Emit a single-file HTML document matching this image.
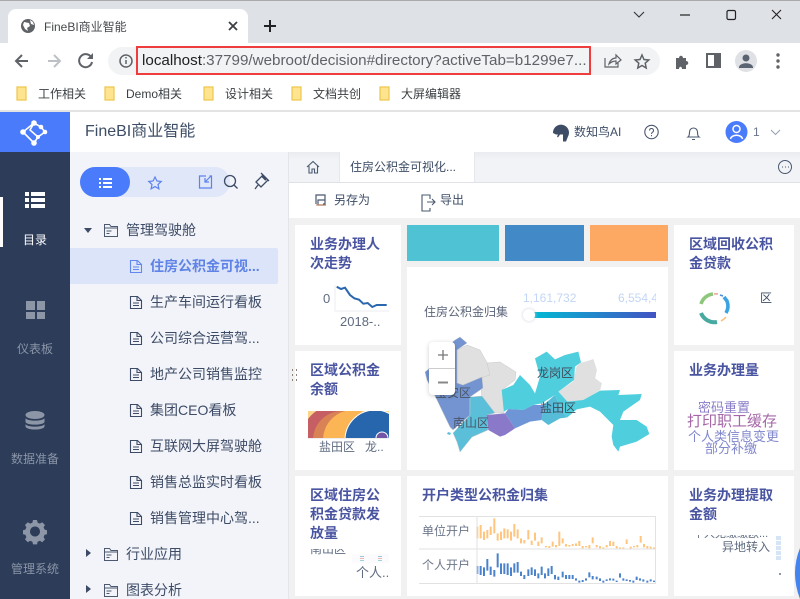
<!DOCTYPE html>
<html lang="zh"><head><meta charset="utf-8"><title>FineBI商业智能</title>
<style>
html,body{margin:0;padding:0;width:800px;height:599px;overflow:hidden;background:#fff}
body{position:relative;font-family:"Liberation Sans","Noto Sans CJK SC",sans-serif}
.b{position:absolute}
.t{position:absolute;white-space:nowrap;line-height:1}
.card{position:absolute;background:#fff}
.ct{position:absolute;font-size:14px;font-weight:bold;color:#4a55a2;line-height:19px;white-space:nowrap}
.row{font-size:14px;color:#3d4b66}
.nav{font-size:12px;color:#8b95a7;text-align:center;width:70px;left:0}
svg{position:absolute;overflow:hidden}
</style></head><body>
<!-- browser chrome -->
<div class="b" style="left:0;top:0;width:800px;height:43px;background:#dee1e6;border-top:1px solid #aaa;box-sizing:border-box"></div>
<div class="b" style="left:8px;top:9px;width:240px;height:34px;background:#fff;border-radius:8px 8px 0 0"></div>
<svg style="left:0;top:0" width="800" height="110" viewBox="0 0 800 110">
<circle cx="28" cy="26" r="7" fill="#5f6368"/><path d="M24 22l5 1 1 3-3 2 1 3-3-2-2-4zM30 20l3 2 1 3-3-1z" fill="#fff"/>
<path d="M229 22l8 8M237 22l-8 8" stroke="#3c4043" stroke-width="1.8"/>
<path d="M270 20v12M264 26h12" stroke="#202124" stroke-width="2"/>
<path d="M634 12l5 5 5-5" fill="none" stroke="#333" stroke-width="1.1"/>
<path d="M680 15h10" stroke="#222" stroke-width="1.2"/>
<rect x="727" y="10.5" width="8.500" height="9" rx="1.500" fill="none" stroke="#222" stroke-width="1.200"/>
<path d="M772 10l9 9M781 10l-9 9" stroke="#222" stroke-width="1.100"/>
<path d="M28 61H16M22 55l-6 6 6 6" fill="none" stroke="#5f6368" stroke-width="2"/>
<path d="M48 61h12M54 55l6 6-6 6" fill="none" stroke="#bdc1c6" stroke-width="2"/>
<path d="M91 57a6.500 6.500 0 1 0 1 5" fill="none" stroke="#5f6368" stroke-width="2"/><path d="M93 53v6h-6z" fill="#5f6368"/>
</svg>
<div class="b" style="left:108px;top:47px;width:552px;height:28px;background:#f1f3f4;border-radius:14px"></div>
<svg style="left:0;top:0" width="800" height="110" viewBox="0 0 800 110">
<circle cx="126" cy="61" r="6" fill="none" stroke="#5f6368" stroke-width="1.500"/><path d="M126 60v4M126 57v1.500" stroke="#5f6368" stroke-width="1.500"/>
<path d="M605 58v9h13v-4" fill="none" stroke="#5f6368" stroke-width="1.200"/><path d="M609 64c1-4 4-6 7-6v-3l5 5-5 4v-3c-3 0-5 1-7 3z" fill="none" stroke="#5f6368" stroke-width="1.200"/>
<path d="M642 55l2 4.500 4.800.5-3.600 3.200 1 4.800-4.200-2.500-4.200 2.500 1-4.800-3.600-3.200 4.800-.5z" fill="none" stroke="#5f6368" stroke-width="1.500"/>
<path d="M676 58h3c0-3 4-3 4 0h3v3c3 0 3 4 0 4v4h-4c0-3-3-3-3 0h-3z" fill="#5f6368"/>
<rect x="707" y="54" width="13" height="13" fill="none" stroke="#5f6368" stroke-width="2"/><rect x="714" y="54" width="7" height="13" fill="#5f6368"/>
<circle cx="746" cy="61" r="11" fill="#dfe1e5"/><circle cx="746" cy="58" r="3.500" fill="#5a6371"/><path d="M739 67c1-5 13-5 14 0v1h-14z" fill="#5a6371"/>
<circle cx="778" cy="55" r="1.700" fill="#5f6368"/><circle cx="778" cy="61" r="1.700" fill="#5f6368"/><circle cx="778" cy="67" r="1.700" fill="#5f6368"/>
<g fill="#ffe48f" stroke="#eec64f" stroke-width="1.200"><path d="M17 87h9v13h-9z"/><path d="M105 87h9v13h-9z"/><path d="M204 87h9v13h-9z"/><path d="M292 87h9v13h-9z"/><path d="M380 87h9v13h-9z"/></g>
</svg>
<div class="b" style="left:136px;top:46px;width:455px;height:29px;border:2px solid #ef3d3d;box-sizing:border-box"></div>
<div class="t" style="left:44px;top:21px;font-size:12px;color:#45484c">FineBI商业智能</div>
<div class="t" style="left:142px;top:53px;font-size:15.200px;color:#5f6368;width:447px;overflow:hidden"><span style="color:#202124">localhost</span>:37799/webroot/decision#directory?activeTab=b1299e7...</div>
<div class="t" style="left:38px;top:88px;font-size:12px;color:#3c4043">工作相关</div>
<div class="t" style="left:126px;top:88px;font-size:12px;color:#3c4043">Demo相关</div>
<div class="t" style="left:225px;top:88px;font-size:12px;color:#3c4043">设计相关</div>
<div class="t" style="left:313px;top:88px;font-size:12px;color:#3c4043">文档共创</div>
<div class="t" style="left:401px;top:88px;font-size:12px;color:#3c4043">大屏编辑器</div>
<div class="b" style="left:0;top:110px;width:800px;height:2px;background:#e3e3e3"></div>

<!-- left nav -->
<div class="b" style="left:0;top:112px;width:70px;height:487px;background:#2c3c59"></div>
<div class="b" style="left:0;top:112px;width:70px;height:40px;background:#4a7bfb"></div>
<svg style="left:0;top:112px" width="70" height="40" viewBox="0 0 70 40">
<path d="M34 31L23 20L34 11L41 15L45 20L38 25L34 31M34 11L30 18L38 25" fill="none" stroke="#fff" stroke-width="1.600"/>
<circle cx="23" cy="20" r="2.800" fill="#fff"/><circle cx="34" cy="11" r="2.800" fill="#fff"/><circle cx="41" cy="15" r="2.300" fill="#fff"/><circle cx="45" cy="20" r="2.300" fill="#fff"/><circle cx="34" cy="31" r="2.800" fill="#fff"/><circle cx="38" cy="25" r="2" fill="#fff"/>
</svg>
<div class="b" style="left:0;top:197px;width:3px;height:50px;background:#fff"></div>
<svg style="left:0;top:112px" width="70" height="487" viewBox="0 112 70 487">
<g fill="#fff"><path d="M25 192h4v4h-4zM31 192h14v4H31zM25 198h4v4h-4zM31 198h14v4H31zM25 204h4v4h-4zM31 204h14v4H31z"/></g>
<g fill="#8d96a6"><path d="M26 301h9v9h-9zM37 301h8v9h-8zM37 312h8v7h-8zM26 312h9v7h-9z"/>
<ellipse cx="35" cy="415" rx="9.500" ry="4"/><path d="M25.500 418c1 3.500 18 3.500 19 0v4c-1 3.500-18 3.500-19 0zM25.500 424c1 3.500 18 3.500 19 0v2.500c-1 4-18 4-19 0z"/>
<path fill-rule="evenodd" d="M33 520h4l.6 2.600 2.300 1 2.300-1.400 2.800 2.800-1.400 2.300 1 2.300 2.400.6v4l-2.400.6-1 2.300 1.400 2.300-2.800 2.800-2.300-1.400-2.300 1-.6 2.600h-4l-.6-2.600-2.300-1-2.300 1.400-2.800-2.800 1.400-2.300-1-2.300-2.400-.6v-4l2.400-.6 1-2.300-1.400-2.300 2.800-2.800 2.300 1.400 2.300-1zM35 526.500a5 5 0 1 0 .01 0z"/></g>
</svg>
<div class="t nav" style="top:234px;color:#fff">目录</div>
<div class="t nav" style="top:343px">仪表板</div>
<div class="t nav" style="top:453px">数据准备</div>
<div class="t nav" style="top:563px">管理系统</div>

<!-- header -->
<div class="t" style="left:85px;top:124px;font-size:16px;color:#3d4d66">FineBI商业智能</div>
<svg style="left:0;top:0" width="800" height="599" viewBox="0 0 800 599">
<path d="M553 133a8 8 0 1 1 15 3.500l-2 5h-3v-7h-3l-2 3-1-1 1-2h-2z" fill="#3d4d66"/>
<circle cx="651.500" cy="132" r="6.700" fill="none" stroke="#4a5870" stroke-width="1.100"/><path d="M649.500 130.500a2 2 0 1 1 3 1.700c-.8.500-1 1-1 1.800M651.500 135v1.200" fill="none" stroke="#4a5870" stroke-width="1"/>
<path d="M688 137c1.500-1 1.500-3 1.500-5a4 4 0 0 1 8 0c0 2 0 4 1.500 5zM692 139.500h3" fill="none" stroke="#4a5870" stroke-width="1.100"/>
<circle cx="736.500" cy="132" r="11" fill="#4a7bfb"/><circle cx="736.500" cy="129" r="3.500" fill="none" stroke="#fff" stroke-width="1.500"/><path d="M730.500 139c1-5 11-5 12 0" fill="none" stroke="#fff" stroke-width="1.500"/>
<path d="M771 130l4.500 4.500 4.500-4.500" fill="none" stroke="#9aa3b2" stroke-width="1.100"/>
</svg>
<div class="t" style="left:574px;top:126px;font-size:12px;color:#3d4d66">数知鸟AI</div>
<div class="t" style="left:753px;top:126px;font-size:12px;color:#6b7689">1</div>

<!-- directory panel -->
<div class="b" style="left:70px;top:152px;width:219px;height:447px;background:#f2f4f9;border-right:1px solid #e3e5ea;box-sizing:border-box"></div>
<div class="b" style="left:80px;top:167px;width:150px;height:30px;background:#e0e7f8;border-radius:15px"></div>
<div class="b" style="left:80px;top:167px;width:50px;height:30px;background:#4a7bfb;border-radius:15px"></div>
<div class="b" style="left:70px;top:248px;width:208px;height:36px;background:#dbe4f8;border-radius:0 2px 2px 0"></div>
<svg style="left:0;top:0" width="800" height="599" viewBox="0 0 800 599">
<path d="M99 178h2v2h-2zM103 178h9v2h-9zM99 182h2v2h-2zM103 182h9v2h-9zM99 186h2v2h-2zM103 186h9v2h-9z" fill="#fff"/>
<path d="M155 177l1.900 4 4.300.5-3.200 3 .9 4.300-3.900-2.200-3.900 2.200.9-4.300-3.200-3 4.300-.5z" fill="none" stroke="#5c82ee" stroke-width="1.200"/>
<path d="M206 176h-6.500v12h12v-12h-2M211 176l-6 6M205 178v4h4" fill="none" stroke="#5c82ee" stroke-width="1.200"/>
<circle cx="230" cy="181" r="5.500" fill="none" stroke="#3d4b66" stroke-width="1.300"/><path d="M234 185l3.500 3.500" stroke="#3d4b66" stroke-width="1.300"/>
<path d="M256 182l7-7 5 5-7 7zM261 173l8 8M258 185l-3 4" fill="none" stroke="#3d4b66" stroke-width="1.300"/><path d="M262 176l4 4" stroke="#3d4b66" stroke-width="2"/>
<path d="M84 228h8l-4 5z" fill="#3d4b66"/><path d="M86 549v8l5-4z" fill="#3d4b66"/><path d="M86 585v8l5-4z" fill="#3d4b66"/>
<g fill="none" stroke="#4a5870" stroke-width="1"><path d="M104.500 236.500v-12h5l1.500 2h6.500v10zM104.500 228h13M106.500 231h5M106.500 233.500h3"/></g>
<g fill="none" stroke="#4a5870" stroke-width="1"><path d="M104.500 560.500v-12h5l1.500 2h6.500v10zM104.500 552h13M106.500 555h5M106.500 557.500h3"/><path d="M104.500 596.500v-12h5l1.500 2h6.500v10zM104.500 588h13M106.500 591h5M106.500 593.500h3"/></g>
<defs><path id="d" d="M130.500 260.500h7l4 4v8h-11zM137 260.500v4h4.500M133 267h6M133 269.500h6" fill="none" stroke-width="1.100"/></defs>
<use href="#d" stroke="#6288ee"/>
<use href="#d" y="36" stroke="#3d4b66"/><use href="#d" y="72" stroke="#3d4b66"/><use href="#d" y="108" stroke="#3d4b66"/><use href="#d" y="144" stroke="#3d4b66"/><use href="#d" y="180" stroke="#3d4b66"/><use href="#d" y="216" stroke="#3d4b66"/><use href="#d" y="252" stroke="#3d4b66"/>
</svg>
<div class="t row" style="left:126px;top:223px">管理驾驶舱</div>
<div class="t row" style="left:150px;top:259px;color:#5f83e6;font-weight:bold">住房公积金可视...</div>
<div class="t row" style="left:150px;top:295px">生产车间运行看板</div>
<div class="t row" style="left:150px;top:331px">公司综合运营驾...</div>
<div class="t row" style="left:150px;top:367px">地产公司销售监控</div>
<div class="t row" style="left:150px;top:403px">集团CEO看板</div>
<div class="t row" style="left:150px;top:439px">互联网大屏驾驶舱</div>
<div class="t row" style="left:150px;top:475px">销售总监实时看板</div>
<div class="t row" style="left:150px;top:511px">销售管理中心驾...</div>
<div class="t row" style="left:126px;top:547px">行业应用</div>
<div class="t row" style="left:126px;top:583px">图表分析</div>

<!-- main tabs -->
<div class="b" style="left:289px;top:152px;width:511px;height:30px;background:linear-gradient(#e9ebf0,#f1f3f7 8px);border-bottom:1px solid #dfe1e7"></div>
<div class="b" style="left:339px;top:152px;width:136px;height:30px;background:#fff;border-right:1px solid #e6e8ec;border-left:1px solid #e6e8ec;box-sizing:border-box"></div>
<div class="t" style="left:350px;top:161px;font-size:12px;color:#3d4d66">住房公积金可视化...</div>
<div class="b" style="left:289px;top:183px;width:511px;height:35px;background:#fff"></div>
<div class="b" style="left:289px;top:218px;width:511px;height:381px;background:#f1f1f1"></div>
<div class="t" style="left:334px;top:194px;font-size:12px;color:#3d4d66">另存为</div>
<div class="t" style="left:440px;top:194px;font-size:12px;color:#3d4d66">导出</div>

<!-- cards -->
<div class="card" style="left:295px;top:225px;width:106px;height:120px"></div>
<div class="card" style="left:407px;top:225px;width:92px;height:36px;background:#4fc3d4"></div>
<div class="card" style="left:505px;top:225px;width:79px;height:36px;background:#4289c7"></div>
<div class="card" style="left:590px;top:225px;width:78px;height:36px;background:#fda863"></div>
<div class="card" style="left:407px;top:267px;width:261px;height:203px"></div>
<div class="card" style="left:674px;top:225px;width:120px;height:120px"></div>
<div class="card" style="left:295px;top:351px;width:106px;height:119px"></div>
<div class="card" style="left:674px;top:351px;width:120px;height:119px"></div>
<div class="card" style="left:295px;top:476px;width:106px;height:120px"></div>
<div class="card" style="left:407px;top:476px;width:261px;height:120px"></div>
<div class="card" style="left:674px;top:476px;width:120px;height:120px"></div>

<div class="ct" style="left:310px;top:235px">业务办理人<br>次走势</div>
<div class="ct" style="left:689px;top:235px">区域回收公积<br>金贷款</div>
<div class="ct" style="left:310px;top:361px">区域公积金<br>余额</div>
<div class="ct" style="left:689px;top:361px">业务办理量</div>
<div class="ct" style="left:310px;top:486px">区域住房公<br>积金贷款发<br>放量</div>
<div class="ct" style="left:422px;top:486px">开户类型公积金归集</div>
<div class="ct" style="left:689px;top:486px">业务办理提取<br>金额</div>

<div class="t" style="left:323px;top:292px;font-size:13px;color:#5f6b80">0</div>
<div class="t" style="left:340px;top:315px;font-size:13px;color:#5f6b80">2018-..</div>
<div class="t" style="left:424px;top:306px;font-size:12px;color:#5b6478">住房公积金归集</div>
<div class="t" style="left:523px;top:292px;font-size:12px;color:#c2d6f5">1,161,732</div>
<div class="t" style="left:618px;top:292px;font-size:12px;color:#c2d6f5;width:38px;overflow:hidden">6,554,4</div>
<div class="b" style="left:530px;top:312px;width:126px;height:6px;background:linear-gradient(90deg,#00bcd4,#4353c2)"></div>
<div class="b" style="left:523px;top:309px;width:12px;height:12px;background:#fff;border-radius:50%;box-shadow:0 0 3px #ccd"></div>
<div class="t" style="left:760px;top:292px;font-size:12px;color:#3d4d66">区</div>

<svg style="left:0;top:0" width="800" height="599" viewBox="0 0 800 599">
<!-- tab/toolbars icons -->
<path d="M307 167l6-5.500 6 5.500M309 166v7h3v-4h2.500v4h3v-7" fill="none" stroke="#4a5870" stroke-width="1.100"/>
<circle cx="785" cy="167" r="6.500" fill="none" stroke="#4a5870" stroke-width="1"/><path d="M782 167h1M785 167h1M788 167h1" stroke="#4a5870"/>
<path d="M316 204v-9h9v9h-2M318 205h7v-5h-7z" fill="none" stroke="#4a5870" stroke-width="1.200"/><path d="M316 205h10" stroke="#c9825a" stroke-width="1"/>
<path d="M430 199v-4h-8v16h8v-3M427 202h8M432 199l3 3-3 3" fill="none" stroke="#4a5870" stroke-width="1.100"/>
<!-- line chart -->
<path d="M335 285V311H389" fill="none" stroke="#eceef2" stroke-width="1"/>
<path d="M336.700 286.700L341 289L345 287.700L350 295L354.300 298.300L359 299.700L363.300 303.700L367.700 303L372.300 307L376.700 305L386.700 305" fill="none" stroke="#2b67af" stroke-width="2"/>
<!-- donut -->
<g fill="none" stroke-width="3.600">
<path d="M713 294a14 14 0 0 0-12 10" stroke="#8dc77b"/>
<path d="M701 313a14.500 14.500 0 0 0 16 9" stroke="#48a9a0" stroke-width="4"/>
<path d="M721 321a14 14 0 0 0 5-4" stroke="#fcc27f" stroke-width="1.600"/>
<path d="M726 313a14 14 0 0 0 1-12l-3-4" stroke="#3aa4e2"/>
<path d="M714 294a14 14 0 0 1 4 0" stroke="#e5a89a" stroke-width="1.600"/>
<path d="M720 295l3 1" stroke="#4a8ddb" stroke-width="1.600"/>
</g>
<!-- treemap/rose -->
<defs><clipPath id="c"><rect x="308" y="411" width="81" height="27"/></clipPath></defs>
<g clip-path="url(#c)"><rect x="308" y="411" width="81" height="27" fill="#f9d48a"/>
<circle cx="336" cy="440" r="35" fill="#c55f63"/><circle cx="342" cy="440" r="29" fill="#d98256"/>
<circle cx="353" cy="440" r="30" fill="#fbb555"/><circle cx="375" cy="440" r="30" fill="#2766ad" stroke="#fff" stroke-width="1"/>
<circle cx="382" cy="438" r="6" fill="#7254a8" stroke="#fff" stroke-width="1"/></g>
<path d="M308 438.500h81" stroke="#eee"/>
<!-- map -->
<g stroke="#c8c8c8" stroke-width=".5">
<path fill="#e0e0e0" d="M457 350L467 345L480 350L490 368L490 375L482 378L463 385L457 383Z"/>
<path fill="#e0e0e0" d="M487 363L500 362L516 372L515 380L502 390L504 413L495 413L482 398L480 378L490 375Z"/>
<path fill="#7394d0" d="M455 340L460 337L467 343L457 350L457 383L463 385L482 377L483 388L470 397L470 415L453 430L450 427L437 400L427 380L425 372L430 368L443 350Z"/>
<path fill="#5cbfd9" d="M470 397L482 396L495 413L487 415L488 430L472 437L460 452L457 442L453 433L470 415Z"/>
<g transform="translate(480,330) scale(.33333)">
<path fill="#e0e0e0" d="M235 185L280 155L290 110L300 100L340 88L350 120L345 145L365 160L360 180L310 210L262 215Z"/>
<path fill="#4fcedd" stroke="none" d="M165 85L200 65L225 88L255 75L295 65L303 97L285 110L282 150L235 185L262 215L310 210L360 182L420 180L415 195L485 192L480 210L430 245L420 270L470 270L500 290L508 312L470 335L420 350L415 365L400 345L395 320L400 285L360 245L330 230L290 238L262 262L245 245L225 195L185 220L160 225L130 240L85 237L72 245L65 180L100 165L120 135L150 165L165 190L180 140Z"/>
<path fill="#56bcd8" stroke="none" d="M225 195L245 245L262 262L240 265L205 285L185 270L190 225Z"/>
<path fill="#6e96d6" stroke="none" d="M75 250L85 237L130 240L160 225L190 225L185 270L150 275L105 295Z"/>
<path fill="#8a78c8" stroke="none" d="M20 255L75 250L105 295L75 315L60 320L25 300Z"/>
</g>
</g>
<path fill="#5cbfd9" d="M448 432l3 1-1 2-3-1z"/>
<!-- sparklines -->
<g transform="translate(290,470) scale(.33333)" stroke="#ffc57f" stroke-width="6" fill="none">
<path d="M562 170V205M572 165V205M582 185V210M592 180V205M602 170V195M613 145V190M623 190V212M633 185V210M643 175V205M653 178V205M663 185V212M673 162V200M683 178V205M693 205V220M703 210V220M715 180V208M725 212V225M735 188V212M745 215V228"/>
</g>
<g transform="translate(540,470) scale(.33333)" stroke="#ffc57f" stroke-width="6" fill="none">
<path d="M5 202V220M18 228V232M28 228V234M38 215V230M48 225V232M58 185V228M68 205V220M78 222V230M88 225V230M98 222V228M108 220V228M118 213V228M128 228V235M138 228V232M148 225V235M158 202V220M170 225V232M180 228V235M190 232V236M200 225V232M210 213V228M220 215V228M230 228V235M240 232V236M250 232V236M260 208V222M272 230V236M282 228V232M292 225V232M302 198V218M312 222V232M322 228V235M332 230V236M342 232V237"/>
</g>
<g transform="translate(290,470) scale(.33333)" stroke="#4a82cc" stroke-width="6" fill="none">
<path d="M562 288V312M572 288V315M582 292V318M592 267V302M602 290V315M613 300V320M623 250V292M633 280V312M643 280V312M653 280V315M663 292V318M673 280V308M683 276V308M693 305V318M703 315V327M715 298V318M725 292V315M735 298V318M745 310V325"/>
</g>
<g transform="translate(540,470) scale(.33333)" stroke="#4a82cc" stroke-width="6" fill="none">
<path d="M5 290V315M15 310V325M25 295V318M35 288V312M45 315V328M55 320V330M68 305V322M78 315V327M88 315V327M98 315V327M108 325V332M118 332V338M128 330V336M138 325V332M148 307V322M158 318V328M170 320V328M180 325V333M190 332V338M200 328V333M210 325V331M220 326V332M230 332V336M240 310V323M250 325V332M260 328V333M270 330V335M280 332V338M290 320V330M300 325V332M310 328V335M322 332V338M332 328V334M342 332V336"/>
</g>
<path d="M419 516.500H655.500V583.500H419M419 549H655.500" fill="none" stroke="#e2e2e2" stroke-width="1"/>
<path d="M477 517V583" stroke="#e2e2e2" stroke-width="1"/>
<!-- mini tiny bits -->
<path d="M352 554h37v9h-37z" fill="#fbfbfd"/><path d="M360 556.500h4M378 556.500h4" stroke="#9fc3df"/><path d="M360 558.500h4M378 558.500h4" stroke="#e8b9b0"/><path d="M360 560.500h4M378 560.500h4" stroke="#9fd3d3"/>
<path d="M778.500 536v24" stroke="#d5e5f5" stroke-width="5" stroke-dasharray="4 1"/>
<circle cx="780" cy="574" r="1" fill="#6b7689"/>
<path d="M800 548Q790 573 800 599Z" fill="#4583ed"/>
<path d="M292 370h1M296 370h1M292 375h1M296 375h1M292 380h1M296 380h1" stroke="#6b5a50" stroke-width="1.500"/>
</svg>

<!-- map labels -->
<div class="t" style="left:435px;top:387px;font-size:12px;color:#4a5568">宝安区</div>
<div class="t" style="left:453px;top:417px;font-size:12px;color:#4a5568">南山区</div>
<div class="t" style="left:537px;top:367px;font-size:12px;color:#3f4a5c">龙岗区</div>
<div class="t" style="left:540px;top:402px;font-size:12px;color:#3f4a5c">盐田区</div>
<div class="b" style="left:429px;top:342px;width:26px;height:53px;background:#fff;border-radius:4px;box-shadow:0 1px 5px rgba(0,0,0,.2)"></div>
<div class="b" style="left:429px;top:368px;width:26px;height:1px;background:#ccc"></div>
<svg style="left:0;top:0" width="800" height="599" viewBox="0 0 800 599"><path d="M443 350v10M438 355h10" stroke="#777" stroke-width="1.300"/><path d="M438 382.500h10" stroke="#888" stroke-width="2"/></svg>

<!-- others text -->
<div class="t" style="left:319px;top:441px;font-size:12px;color:#5f6b80">盐田区</div>
<div class="t" style="left:365px;top:441px;font-size:12px;color:#5f6b80">龙..</div>
<div class="t" style="left:698px;top:401px;font-size:13px;color:#8b7cc8">密码重置</div>
<div class="t" style="left:687px;top:414px;font-size:15px;color:#a567a8">打印职工缓存</div>
<div class="t" style="left:688px;top:430px;font-size:13px;color:#8087cc">个人类信息变更</div>
<div class="t" style="left:705px;top:442px;font-size:13px;color:#8087cc">部分补缴</div>
<div class="t" style="left:310px;top:549px;font-size:12px;color:#5f6b80;height:7px;overflow:hidden;line-height:8px"><span style="position:relative;top:-4px">南山区</span></div>
<div class="t" style="left:356px;top:566px;font-size:13px;color:#5f6b80">个人..</div>
<div class="t" style="left:422px;top:525px;font-size:12px;color:#6b7689">单位开户</div>
<div class="t" style="left:422px;top:559px;font-size:12px;color:#6b7689">个人开户</div>
<div class="t" style="left:693px;top:535px;font-size:11px;color:#5f6b80;height:5px;overflow:hidden;line-height:5px"><span style="position:relative;top:-3px">个人无缴缴欧...</span></div>
<div class="t" style="left:722px;top:541px;font-size:12px;color:#5f6b80">异地转入</div>
</body></html>
